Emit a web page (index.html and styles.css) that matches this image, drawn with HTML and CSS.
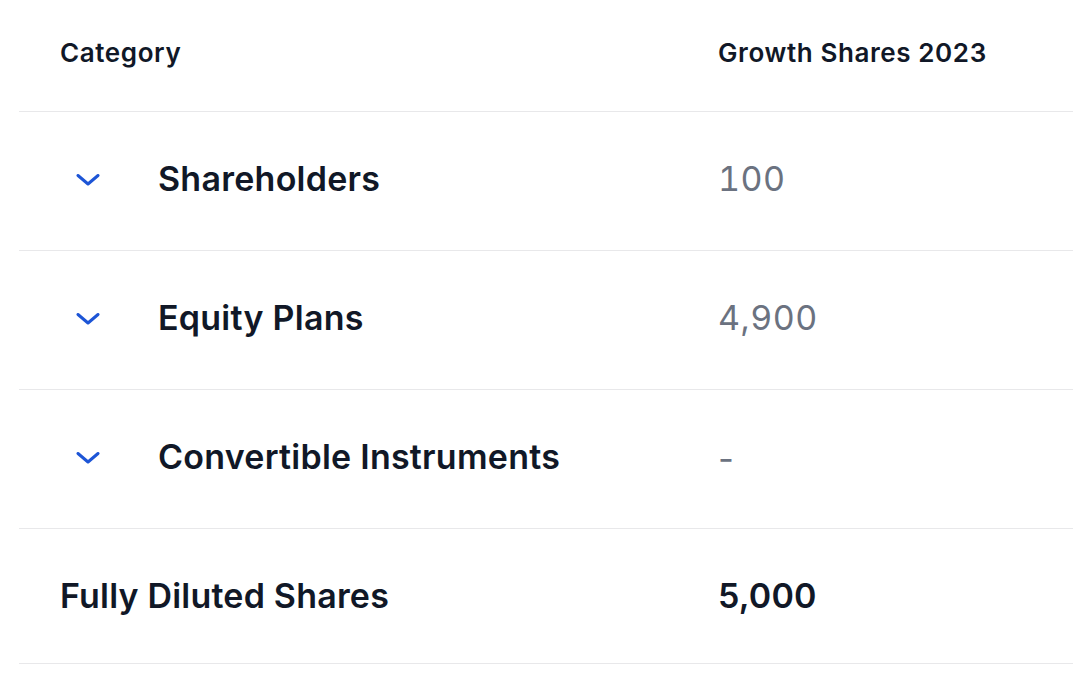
FILE: index.html
```html
<!DOCTYPE html>
<html lang="en">
<head>
<meta charset="utf-8">
<title>Growth Shares</title>
<link rel="stylesheet" href="styles.css">
</head>
<body>
<div class="table">
  <div class="row head">
    <div class="cell cat">Category</div>
    <div class="cell val">Growth Shares 2023</div>
  </div>
  <div class="row group">
    <div class="cell cat">
      <span class="chev"><svg width="24" height="12" viewBox="0 0 24 12"><path d="M2 1.5 L12 10 L22 1.5" fill="none" stroke="#1d55d6" stroke-width="3" stroke-linecap="round" stroke-linejoin="round"/></svg></span>
      <span class="name">Shareholders</span>
    </div>
    <div class="cell val num">100</div>
  </div>
  <div class="row group">
    <div class="cell cat">
      <span class="chev"><svg width="24" height="12" viewBox="0 0 24 12"><path d="M2 1.5 L12 10 L22 1.5" fill="none" stroke="#1d55d6" stroke-width="3" stroke-linecap="round" stroke-linejoin="round"/></svg></span>
      <span class="name">Equity Plans</span>
    </div>
    <div class="cell val num">4,900</div>
  </div>
  <div class="row group">
    <div class="cell cat">
      <span class="chev"><svg width="24" height="12" viewBox="0 0 24 12"><path d="M2 1.5 L12 10 L22 1.5" fill="none" stroke="#1d55d6" stroke-width="3" stroke-linecap="round" stroke-linejoin="round"/></svg></span>
      <span class="name">Convertible Instruments</span>
    </div>
    <div class="cell val num dash">-</div>
  </div>
  <div class="row total">
    <div class="cell cat">Fully Diluted Shares</div>
    <div class="cell val">5,000</div>
  </div>
</div>
</body>
</html>
```
FILE: styles.css
```css
html, body {
  margin: 0;
  padding: 0;
  background: #ffffff;
}
body {
  font-family: Inter, "Noto Sans", sans-serif;
  color: #111827;
}
.table {
  margin-left: 19px;
}
.row {
  display: grid;
  grid-template-columns: 699px 1fr;
  align-items: center;
  border-bottom: 1px solid #e8e8ea;
}
.cell {
  padding-bottom: 5px;
}
.head {
  height: 111px;
  font-size: 26px;
  font-weight: 600;
  letter-spacing: 0.6px;
}
.head .cell {
  padding-bottom: 7px;
}
.group {
  height: 138px;
}
.total {
  height: 134px;
}
.cat {
  padding-left: 41px;
  display: flex;
  align-items: center;
}
.chev {
  display: flex;
  width: 98px;
  margin-left: 16px;
  margin-right: -16px;
  padding-top: 3px;
}
.name {
  font-size: 34px;
  font-weight: 600;
  letter-spacing: 0.25px;
}
.num {
  font-size: 34px;
  color: #6b7280;
  font-variant-numeric: tabular-nums;
  letter-spacing: 0.5px;
}
.dash {
  padding-left: 0;
  text-indent: -3px;
  padding-bottom: 1px;
}
.total .cat, .total .val {
  font-size: 34px;
  font-weight: 600;
  letter-spacing: 0.2px;
}
.total .cell {
  padding-bottom: 1px;
}
```
